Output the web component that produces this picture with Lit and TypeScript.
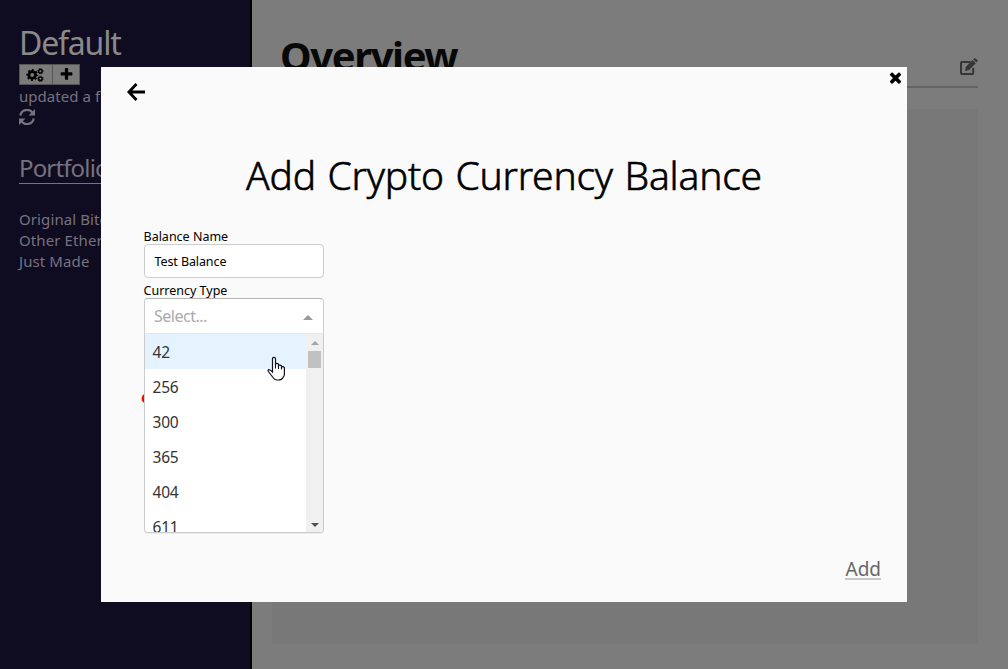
import { LitElement, html, css } from "lit";
import { customElement, property, state } from "lit/decorators.js";
import { classMap } from "lit/directives/class-map.js";

const PLUS = "M1600 736v192q0 40-28 68t-68 28h-416v416q0 40-28 68t-68 28h-192q-40 0-68-28t-28-68v-416h-416q-40 0-68-28t-28-68v-192q0-40 28-68t68-28h416v-416q0-40 28-68t68-28h192q40 0 68 28t28 68v416h416q40 0 68 28t28 68z";
const TIMES = "M1490 1322q0 40-28 68l-136 136q-28 28-68 28t-68-28l-294-294-294 294q-28 28-68 28t-68-28l-136-136q-28-28-28-68t28-68l294-294-294-294q-28-28-28-68t28-68l136-136q28-28 68-28t68 28l294 294 294-294q28-28 68-28t68 28l136 136q28 28 28 68t-28 68l-294 294 294 294q28 28 28 68z";

@customElement("side-bar")
class SideBar extends LitElement {
  @property({ type: Array }) balances: string[] = [];
  static styles = css`
    :host { display: flex; flex-direction: column; align-items: flex-start; box-sizing: border-box; width: 252px; height: 669px; padding: 21px 19px 0; background: #0f0b21; border-right: 2px solid #000; color: #76737f; }
    .name { font-size: 32px; line-height: 43px; color: #8a8a8a; letter-spacing: -1.2px; white-space: nowrap; }
    .buttons { display: flex; height: 21px; }
    .button { display: flex; align-items: center; justify-content: center; box-sizing: border-box; height: 21px; width: 34px; border: 1px solid #555; background: #7b7b7b; }
    .button + .button { width: 28px; margin-left: -1px; }
    .gears { margin-right: 2px; }
    .updated { font-size: 15px; line-height: 21px; margin-top: 1px; letter-spacing: 0.05px; white-space: nowrap; }
    .refresh { display: block; margin-top: 2px; }
    .heading { box-sizing: border-box; width: 212px; height: 34px; margin-top: 25px; border-bottom: 1px solid #76737f; font-size: 24px; line-height: 36px; letter-spacing: -0.85px; }
    .list { margin-top: 25px; font-size: 15px; line-height: 21px; letter-spacing: 0.1px; white-space: nowrap; }
  `;
  render() {
    return html`
      <div class="name">Default</div>
      <div class="buttons">
        <div class="button"><svg class="gears" width="18" height="14" viewBox="0 0 18 14" fill="none" stroke="#000">
          <circle cx="6.2" cy="7" r="3.3" stroke-width="2.8"/>
          <circle cx="6.2" cy="7" r="5" stroke-width="1.8" stroke-dasharray="2 1.927" stroke-dashoffset="1"/>
          <circle cx="14.4" cy="3.2" r="1.8" stroke-width="1.5"/><circle cx="14.4" cy="3.2" r="2.7" stroke-width=".8" stroke-dasharray="1.1 1.02"/>
          <circle cx="14.4" cy="10.8" r="1.8" stroke-width="1.5"/><circle cx="14.4" cy="10.8" r="2.7" stroke-width=".8" stroke-dasharray="1.1 1.02"/>
        </svg></div>
        <div class="button"><svg width="15" height="15" viewBox="0 0 1792 1792"><path d=${PLUS}></path></svg></div>
      </div>
      <div class="updated">updated a few seconds ago</div>
      <svg class="refresh" width="16" height="16" viewBox="0 0 16 16" fill="none" stroke="#76737f" stroke-width="2.2">
        <path d="M1.300 6.500A6.800 6.800 0 0 1 13.400 3.600M14.700 9.500A6.800 6.800 0 0 1 2.600 12.400"/>
        <path d="M16 0v6.500H9.500zM0 16V9.500h6.500z" fill="#76737f" stroke="none"/>
      </svg>
      <div class="heading">Portfolio</div>
      <div class="list">${this.balances.map((b) => html`<div>${b}</div>`)}</div>`;
  }
}

@customElement("overview-pane")
class OverviewPane extends LitElement {
  static styles = css`
    :host { display: block; flex: 1; box-sizing: border-box; height: 669px; padding: 28px 30px 0 20px; background: #7c7c7c; }
    .head { display: flex; align-items: flex-start; justify-content: space-between; box-sizing: border-box; height: 60px; padding-left: 8px; border-bottom: 2px solid #646464; }
    .title { font-size: 40px; line-height: 56px; font-weight: 700; color: #080808; letter-spacing: -1.4px; }
    .edit { margin-top: 30px; }
    .card { height: 535px; margin-top: 21px; background: #787878; }
  `;
  render() {
    return html`<div class="head"><div class="title">Overview</div>
      <svg class="edit" width="18" height="18" viewBox="0 0 18 18" fill="none" stroke="#353535">
        <path d="M10.500 4H2a1 1 0 0 0-1 1v10a1 1 0 0 0 1 1h10.200a1 1 0 0 0 1-1V10" stroke-width="2"/>
        <path d="M5 12.900l.9-4.200 6.700-6.700 3.200 3.200-6.700 6.700zM13.300 1.300l.8-.8q.8-.7 1.600 0l1.600 1.600q.7.700 0 1.500l-.9.900z" fill="#353535" stroke="none"/>
      </svg></div><div class="card"></div>`;
  }
}

@customElement("currency-select")
class CurrencySelect extends LitElement {
  @property({ type: Array }) options: string[] = [];
  @state() private focused = 0;
  static styles = css`
    :host { display: block; width: 180px; }
    .control { display: flex; align-items: center; justify-content: space-between; box-sizing: border-box; height: 35px; padding: 0 10px 0 9px; background: #fff; border: 1px solid #ccc; border-top-color: #b3b3b3; border-bottom: 0; border-radius: 4px 4px 0 0; color: #aaa; font-size: 16px; line-height: 34px; letter-spacing: -0.5px; }
    .arrow { margin-top: 2px; }
    .menu { display: flex; box-sizing: border-box; height: 200px; overflow: hidden; background: #fff; border: 1px solid #ccc; border-top-color: #e6e6e6; border-radius: 0 0 4px 4px; box-shadow: 0 1px 0 rgba(0,0,0,.06); }
    .options { flex: 1; height: 198px; overflow: hidden; }
    .option { box-sizing: border-box; height: 35px; padding: 1px 7.5px 0; line-height: 35px; font-size: 15.5px; color: #333; letter-spacing: -0.2px; }
    .active { background: #e5f2ff; }
    .scroll { display: flex; flex-direction: column; align-items: center; width: 17px; background: #f0f0f0; }
    .thumb { width: 13px; height: 17px; margin-top: 6px; background: #c1c1c1; }
    .up { margin-top: 7px; }
    .down { margin-top: auto; margin-bottom: 5px; }
  `;
  render() {
    return html`<div class="control"><span>Select...</span><svg class="arrow" width="10" height="5" viewBox="0 0 10 5"><path d="M0 5L5 0l5 5z" fill="#999"/></svg></div>
      <div class="menu"><div class="options">${this.options.map((o, i) => html`<div class=${classMap({ option: true, active: i === this.focused })} @mouseenter=${() => (this.focused = i)}>${o}</div>`)}</div>
        <div class="scroll"><svg class="up" width="8" height="4" viewBox="0 0 8 4"><path d="M0 4l4-4 4 4z" fill="#a3a3a3"/></svg><div class="thumb"></div>
        <svg class="down" width="8" height="4" viewBox="0 0 8 4"><path d="M0 0l4 4 4-4z" fill="#505050"/></svg></div></div>`;
  }
}

@customElement("balance-dialog")
class BalanceDialog extends LitElement {
  static styles = css`
    :host { display: flex; flex-direction: column; box-sizing: border-box; width: 806px; height: 535px; background: #fafafa; color: #000; }
    .bar { display: flex; justify-content: space-between; height: 34px; padding: 0 3px 0 26px; }
    .back { margin-top: 16px; }
    .close { margin-top: 2px; }
    .title { margin-top: 46px; height: 57px; line-height: 56px; text-align: center; font-size: 39px; font-weight: 300; -webkit-text-stroke: 0.6px #000; white-space: nowrap; }
    .title span { letter-spacing: -0.2px; word-spacing: 1.6px; }
    .form { display: flex; flex-direction: column; padding-left: 43px; margin-top: 24px; position: relative; }
    .label { font-size: 12.5px; height: 16px; line-height: 17px; margin-left: -0.5px; }
    .input { box-sizing: border-box; width: 180px; height: 34px; margin-bottom: 4px; padding: 0 9.5px; border: 1px solid #ccc; border-radius: 4px; background: #fff; font-size: 12.5px; line-height: 33px; letter-spacing: -0.1px; }
    .error { position: absolute; left: 40px; top: 159px; color: #f00; font-size: 16px; font-weight: 700; line-height: 21px; }
    currency-select { position: relative; }
    .foot { display: flex; justify-content: flex-end; padding: 24px 26px 0; }
    .add { box-sizing: border-box; height: 23px; line-height: 24px; border-bottom: 2px solid #c8c8c8; font-size: 19px; color: #666; }
  `;
  render() {
    const options = ["42", "256", "300", "365", "404", "611"];
    return html`<div class="bar">
        <svg class="back" width="19" height="18" viewBox="0 0 19 18" fill="none" stroke="#000" stroke-width="2.8"><path d="M18 9H2M9.500 1L1.900 9l7.600 8"/></svg>
        <svg class="close" width="17" height="17" viewBox="0 0 1792 1792"><path d=${TIMES}></path></svg>
      </div>
      <div class="title"><span>Add Crypto Currency Balance</span></div>
      <div class="form">
        <div class="label">Balance Name</div><div class="input">Test Balance</div>
        <div class="label">Currency Type</div>
        <div class="error">c</div>
        <currency-select .options=${options}></currency-select>
      </div>
      <div class="foot"><div class="add">Add</div></div>`;
  }
}

@customElement("app-root")
class AppRoot extends LitElement {
  static styles = css`
    :host { display: flex; width: 1008px; height: 669px; overflow: hidden; font-family: "Noto Sans", "Open Sans", sans-serif; }
    balance-dialog { position: absolute; left: 101px; top: 67px; }
    .pointer { position: absolute; left: 267px; top: 356px; }
  `;
  render() {
    return html`<side-bar .balances=${["Original Bitcoin", "Other Ethereum", "Just Made"]}></side-bar>
      <overview-pane></overview-pane><balance-dialog></balance-dialog>
      <svg class="pointer" width="19" height="25" viewBox="0 0 19 25"><path d="M5.5 15V3q0-1.7 1.5-1.7T8.5 3v6V8q1.300-1.300 3 0v1.500q1.500-1 3 .4v1q1.700-.8 2.900.7V18q0 2-1.400 3.500-1.200 2.500-4.500 2.500H10q-2.400 0-3.600-2L1.200 15.300q-.5-1.500.8-1.700 1.200-.1 3.500 2.400z" fill="#fff" stroke="#111122" stroke-width="1.2"/><path d="M8.500 8v4.500M11.500 9v4M14.500 10v3.500" stroke="#111122" stroke-width="1.100"/></svg>`;
  }
}
